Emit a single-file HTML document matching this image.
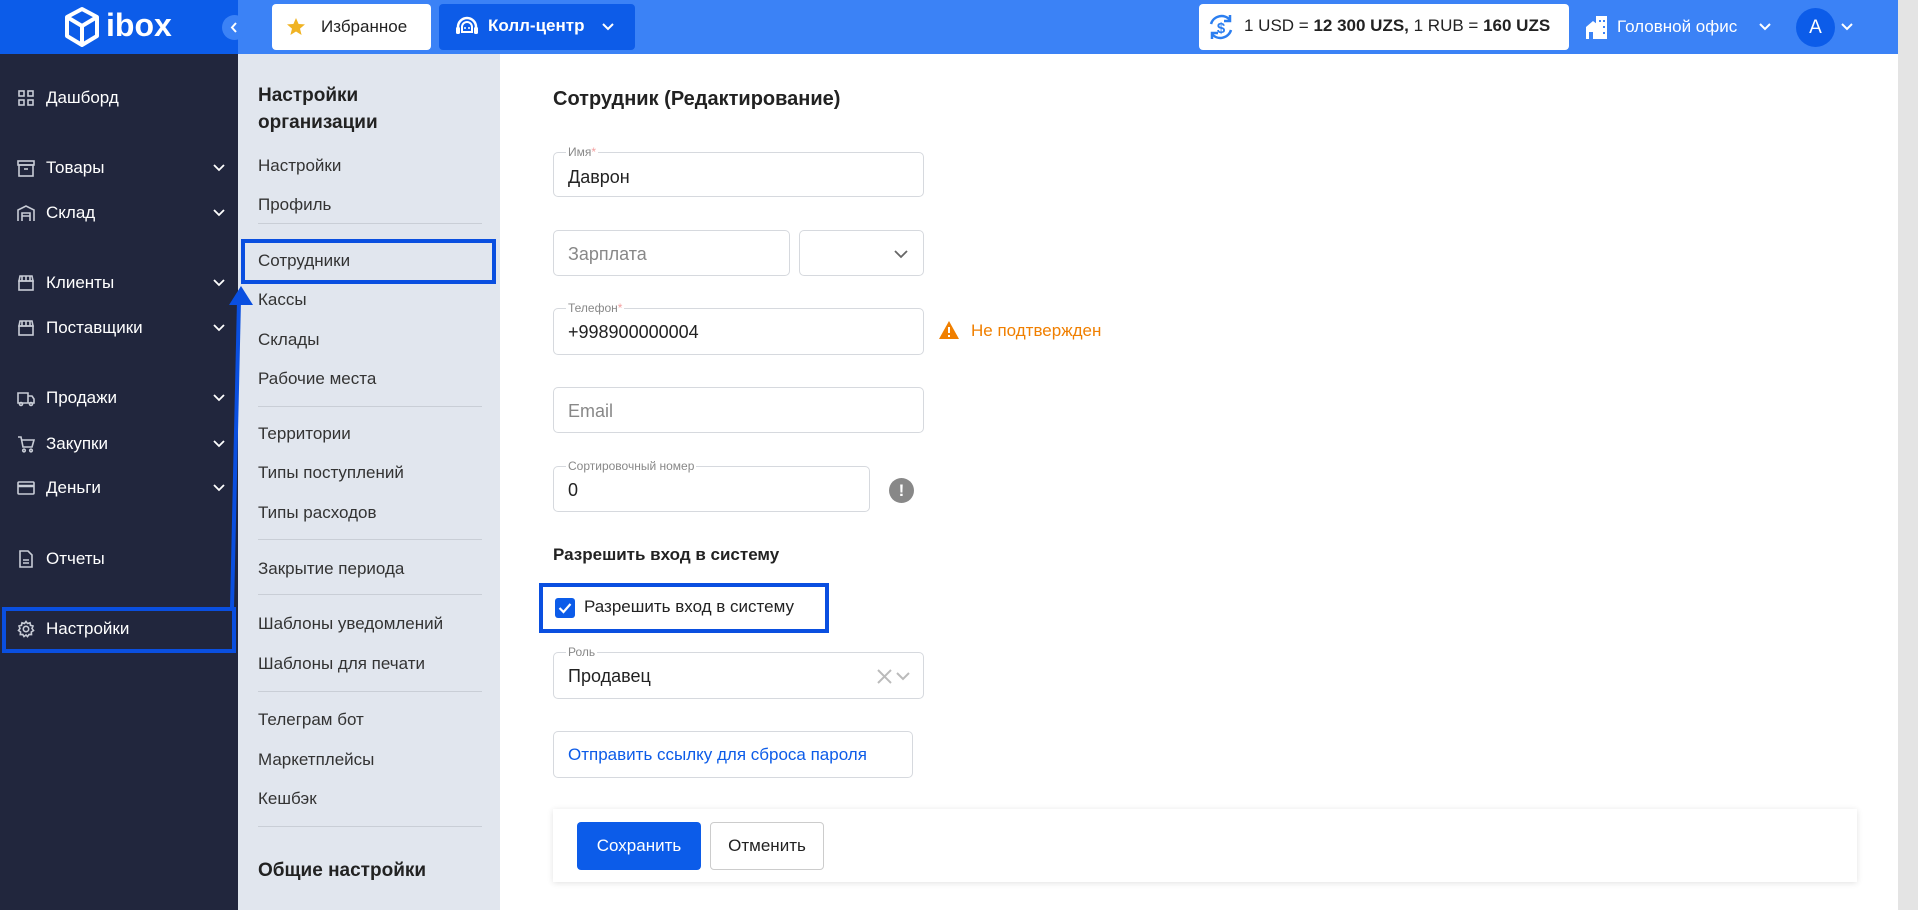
<!DOCTYPE html>
<html><head><meta charset="utf-8"><style>
*{box-sizing:border-box;margin:0;padding:0}
body{width:1918px;height:910px;overflow:hidden;font-family:"Liberation Sans","Noto Sans CJK SC",sans-serif;background:#fff;position:relative;color:#222}
.abs{position:absolute}
.hdr{left:0;top:0;width:1918px;height:54px;background:#3b82f6}
.logo{left:0;top:0;width:238px;height:54px;background:#0c5ce9}
.side{left:0;top:54px;width:238px;height:856px;background:#21263d}
.sub{left:238px;top:54px;width:262px;height:856px;background:#e1e6ee}
.si{position:absolute;left:46px;color:#fff;font-size:17px;line-height:20px}
.sic{position:absolute;left:17px;width:18px;height:18px}
.chev{position:absolute;left:213px;width:12px;height:8px}
.sm{position:absolute;left:258px;color:#333;font-size:17px;line-height:20px}
.dv{position:absolute;left:258px;width:224px;height:1px;background:#c9ced6}
.inp{position:absolute;border:1px solid #d6d9de;border-radius:5px;background:#fff;font-size:18px;color:#222}
.lbl{position:absolute;top:-8px;left:12px;background:#fff;padding:0 2px;font-size:12px;color:#888;line-height:14px}
.lbl b{color:#f3a0a0;font-weight:normal}
.val{position:absolute;left:14px;top:12px;line-height:22px}
.ph{color:#888}
</style></head><body>
<div class="abs hdr"></div>
<div class="abs logo"></div>
<svg class="abs" style="left:62px;top:6px" width="40" height="42" viewBox="0 0 40 42"><path d="M20 3 L35 11 V30 L20 39 L5 30 V11 Z M5 11 L20 20 L35 11 M20 20 V39" fill="none" stroke="#fff" stroke-width="4" stroke-linejoin="round"/></svg>
<div class="abs" style="left:106px;top:6px;color:#fff;font-weight:bold;font-size:32px;line-height:38px">ibox</div>
<div class="abs" style="left:222px;top:15px;width:25px;height:25px;border-radius:50%;background:#3b82f6"></div>
<svg class="abs" style="left:229px;top:21px" width="10" height="13" viewBox="0 0 10 13"><path d="M7 2 L3 6.5 L7 11" stroke="#fff" stroke-width="2" fill="none"/></svg>
<div class="abs" style="left:272px;top:4px;width:159px;height:46px;background:#fff;border-radius:4px"></div>
<svg class="abs" style="left:286px;top:17px" width="20" height="20" viewBox="0 0 20 20"><path d="M10 1 L12.6 7 L19 7.4 L14 11.6 L15.6 18 L10 14.5 L4.4 18 L6 11.6 L1 7.4 L7.4 7 Z" fill="#f0b323"/></svg>
<div class="abs" style="left:321px;top:17px;font-size:17px;color:#222">Избранное</div>
<div class="abs" style="left:439px;top:4px;width:196px;height:46px;background:#0d5ce8;border-radius:4px"></div>
<svg class="abs" style="left:454px;top:14px" width="26" height="26" viewBox="0 0 26 26"><path d="M4 17 V13 A9 9 0 0 1 22 13 V17" fill="none" stroke="#fff" stroke-width="2.5"/><rect x="2" y="13" width="4" height="7" rx="1.5" fill="#fff"/><rect x="20" y="13" width="4" height="7" rx="1.5" fill="#fff"/><path d="M8 13 A5 5 0 0 1 18 13 V18 H8Z" fill="none" stroke="#fff" stroke-width="2"/><circle cx="11" cy="14" r="1" fill="#fff"/><circle cx="15" cy="14" r="1" fill="#fff"/></svg>
<div class="abs" style="left:488px;top:16px;font-size:17px;color:#fff;font-weight:bold">Колл-центр</div>
<svg class="abs" style="left:601px;top:22px" width="14" height="10" viewBox="0 0 14 10"><path d="M2 2 L7 7 L12 2" stroke="#fff" stroke-width="2" fill="none"/></svg>
<div class="abs" style="left:1199px;top:4px;width:370px;height:46px;background:#fff;border-radius:4px"></div>
<svg class="abs" style="left:1206px;top:12px" width="30" height="30" viewBox="0 0 30 30"><path d="M5 12 A11 11 0 0 1 24 8 M25 18 A11 11 0 0 1 6 22" fill="none" stroke="#2b7ef0" stroke-width="2.5"/><path d="M24 3 V9 H18 M6 27 V21 H12" fill="none" stroke="#2b7ef0" stroke-width="2.5"/><text x="15" y="21" font-size="15" font-weight="bold" fill="#2b7ef0" text-anchor="middle" font-family="Liberation Sans">$</text></svg>
<div class="abs" style="left:1244px;top:16px;font-size:17px;color:#222;white-space:nowrap">1 USD = <b>12 300 UZS,</b> 1 RUB = <b>160 UZS</b></div>
<svg class="abs" style="left:1585px;top:14px" width="24" height="26" viewBox="0 0 24 26"><path d="M1 13 L8 7 L12 10 V25 H1Z" fill="#fff"/><rect x="11" y="2" width="11" height="23" fill="#fff"/><rect x="4" y="18" width="4" height="7" fill="#3b82f6"/><rect x="14" y="6" width="2" height="2" fill="#3b82f6"/><rect x="18" y="6" width="2" height="2" fill="#3b82f6"/><rect x="18" y="12" width="2" height="2" fill="#3b82f6"/><rect x="18" y="18" width="2" height="2" fill="#3b82f6"/></svg>
<div class="abs" style="left:1617px;top:17px;font-size:17px;color:#fff">Головной офис</div>
<svg class="abs" style="left:1758px;top:22px" width="14" height="10" viewBox="0 0 14 10"><path d="M2 2 L7 7 L12 2" stroke="#fff" stroke-width="2" fill="none"/></svg>
<div class="abs" style="left:1796px;top:8px;width:39px;height:39px;border-radius:50%;background:#0c5ce9;color:#fff;font-size:19px;text-align:center;line-height:39px">A</div>
<svg class="abs" style="left:1840px;top:22px" width="14" height="10" viewBox="0 0 14 10"><path d="M2 2 L7 7 L12 2" stroke="#fff" stroke-width="2" fill="none"/></svg>
<div class="abs" style="left:1898px;top:0;width:20px;height:910px;background:#e4e4e4"></div>

<div class="abs side"></div>
<div class="abs sub"></div>

<!-- sidebar items -->
<svg class="sic" style="top:89px" viewBox="0 0 18 18"><g fill="none" stroke="#c8ccd6" stroke-width="1.6"><rect x="2" y="2" width="5" height="5"/><rect x="11" y="2" width="5" height="5"/><rect x="2" y="11" width="5" height="5"/><rect x="11" y="11" width="5" height="5"/></g></svg>
<div class="si" style="top:88px">Дашборд</div>
<svg class="sic" style="top:159px" viewBox="0 0 18 18"><g fill="none" stroke="#c8ccd6" stroke-width="1.6"><rect x="1" y="2" width="16" height="4"/><rect x="2" y="6" width="14" height="11"/><path d="M7 10 H11"/></g></svg>
<div class="si" style="top:158px">Товары</div>
<svg class="sic" style="top:204px" viewBox="0 0 18 18"><g fill="none" stroke="#c8ccd6" stroke-width="1.6"><path d="M1 17 V6 L9 2 L17 6 V17"/><path d="M5 17 V9 H13 V17 M5 12 H13"/></g></svg>
<div class="si" style="top:203px">Склад</div>
<svg class="sic" style="top:274px" viewBox="0 0 18 18"><g fill="none" stroke="#c8ccd6" stroke-width="1.6"><path d="M2 7 L3 2 H15 L16 7 Z M5 2 V7 M9 2 V7 M13 2 V7"/><rect x="2" y="7" width="14" height="9"/></g></svg>
<div class="si" style="top:273px">Клиенты</div>
<svg class="sic" style="top:319px" viewBox="0 0 18 18"><g fill="none" stroke="#c8ccd6" stroke-width="1.6"><path d="M2 7 L3 2 H15 L16 7 Z M5 2 V7 M9 2 V7 M13 2 V7"/><rect x="2" y="7" width="14" height="9"/></g></svg>
<div class="si" style="top:318px">Поставщики</div>
<svg class="sic" style="top:389px" viewBox="0 0 18 18"><g fill="none" stroke="#c8ccd6" stroke-width="1.6"><path d="M1 4 H11 V14 H1Z M11 7 H15 L17 10 V14 H11"/><circle cx="4" cy="15" r="1.5"/><circle cx="14" cy="15" r="1.5"/></g></svg>
<div class="si" style="top:388px">Продажи</div>
<svg class="sic" style="top:435px" viewBox="0 0 18 18"><g fill="none" stroke="#c8ccd6" stroke-width="1.6"><path d="M1 2 H4 L6 12 H15 L17 5 H5"/><circle cx="7" cy="15.5" r="1.3"/><circle cx="14" cy="15.5" r="1.3"/></g></svg>
<div class="si" style="top:434px">Закупки</div>
<svg class="sic" style="top:479px" viewBox="0 0 18 18"><g fill="none" stroke="#c8ccd6" stroke-width="1.6"><rect x="1" y="3" width="16" height="12" rx="1"/><path d="M1 7 H17" stroke-width="2.5"/></g></svg>
<div class="si" style="top:478px">Деньги</div>
<svg class="sic" style="top:550px" viewBox="0 0 18 18"><g fill="none" stroke="#c8ccd6" stroke-width="1.6"><path d="M3 1 H11 L15 5 V17 H3Z M6 10 H12 M6 13 H12"/></g></svg>
<div class="si" style="top:549px">Отчеты</div>
<svg class="sic" style="top:620px" viewBox="0 0 18 18"><g fill="none" stroke="#c8ccd6" stroke-width="1.6"><circle cx="9" cy="9" r="2.7"/><path d="M9 1.5 L10.5 3.5 L13 2.8 L13.5 5.3 L16 6 L15 8.5 L16.5 10.5 L14.3 12 L14.5 14.6 L12 14.5 L10.5 16.6 L9 15 L7 16.6 L5.8 14.5 L3.3 14.6 L3.6 12 L1.5 10.5 L3 8.5 L2 6 L4.5 5.3 L5 2.8 L7.5 3.5Z"/></g></svg>
<div class="si" style="top:619px">Настройки</div>
<svg class="chev" style="top:164px" viewBox="0 0 12 8"><path d="M1 1 L6 6 L11 1" stroke="#fff" stroke-width="1.8" fill="none"/></svg>
<svg class="chev" style="top:209px" viewBox="0 0 12 8"><path d="M1 1 L6 6 L11 1" stroke="#fff" stroke-width="1.8" fill="none"/></svg>
<svg class="chev" style="top:279px" viewBox="0 0 12 8"><path d="M1 1 L6 6 L11 1" stroke="#fff" stroke-width="1.8" fill="none"/></svg>
<svg class="chev" style="top:324px" viewBox="0 0 12 8"><path d="M1 1 L6 6 L11 1" stroke="#fff" stroke-width="1.8" fill="none"/></svg>
<svg class="chev" style="top:394px" viewBox="0 0 12 8"><path d="M1 1 L6 6 L11 1" stroke="#fff" stroke-width="1.8" fill="none"/></svg>
<svg class="chev" style="top:440px" viewBox="0 0 12 8"><path d="M1 1 L6 6 L11 1" stroke="#fff" stroke-width="1.8" fill="none"/></svg>
<svg class="chev" style="top:484px" viewBox="0 0 12 8"><path d="M1 1 L6 6 L11 1" stroke="#fff" stroke-width="1.8" fill="none"/></svg>
<div class="abs" style="left:2px;top:607px;width:234px;height:46px;border:4px solid #0a4fe0"></div>

<!-- submenu -->
<div class="sm" style="top:82px;font-weight:bold;font-size:19px;line-height:27px;color:#222">Настройки<br>организации</div>
<div class="sm" style="top:156px">Настройки</div>
<div class="sm" style="top:195px">Профиль</div>
<div class="dv" style="top:223px"></div>
<div class="sm" style="top:251px">Сотрудники</div>
<div class="sm" style="top:290px">Кассы</div>
<div class="sm" style="top:330px">Склады</div>
<div class="sm" style="top:369px">Рабочие места</div>
<div class="dv" style="top:406px"></div>
<div class="sm" style="top:424px">Территории</div>
<div class="sm" style="top:463px">Типы поступлений</div>
<div class="sm" style="top:503px">Типы расходов</div>
<div class="dv" style="top:539px"></div>
<div class="sm" style="top:559px">Закрытие периода</div>
<div class="dv" style="top:594px"></div>
<div class="sm" style="top:614px">Шаблоны уведомлений</div>
<div class="sm" style="top:654px">Шаблоны для печати</div>
<div class="dv" style="top:691px"></div>
<div class="sm" style="top:710px">Телеграм бот</div>
<div class="sm" style="top:750px">Маркетплейсы</div>
<div class="sm" style="top:789px">Кешбэк</div>
<div class="dv" style="top:826px"></div>
<div class="sm" style="top:861px;font-weight:bold;font-size:19px;color:#222">Общие настройки</div>
<div class="abs" style="left:241px;top:239px;width:255px;height:45px;border:4px solid #0a4fe0"></div>
<svg class="abs" style="left:0;top:0" width="500" height="910"><path d="M232 608 L239 300" stroke="#0a4fe0" stroke-width="4"/><path d="M241 286 L229 305 L253 305 Z" fill="#0a4fe0"/></svg>

<!-- main -->
<div class="abs" style="left:553px;top:88px;font-size:20px;font-weight:bold;color:#222">Сотрудник (Редактирование)</div>
<div class="inp" style="left:553px;top:152px;width:371px;height:45px"><span class="lbl">Имя<b>*</b></span><span class="val" style="top:13px">Даврон</span></div>
<div class="inp" style="left:553px;top:230px;width:237px;height:46px"><span class="val ph">Зарплата</span></div>
<div class="inp" style="left:799px;top:230px;width:125px;height:46px"><svg class="abs" style="left:94px;top:19px" width="14" height="9" viewBox="0 0 14 9"><path d="M1 1 L7 7 L13 1" stroke="#666" stroke-width="1.8" fill="none"/></svg></div>
<div class="inp" style="left:553px;top:308px;width:371px;height:47px"><span class="lbl">Телефон<b>*</b></span><span class="val">+998900000004</span></div>
<svg class="abs" style="left:938px;top:320px" width="22" height="20" viewBox="0 0 22 20"><path d="M11 1 L21 19 H1 Z" fill="#f07f00"/><rect x="10" y="7" width="2" height="6" fill="#fff"/><rect x="10" y="15" width="2" height="2" fill="#fff"/></svg>
<div class="abs" style="left:971px;top:321px;font-size:17px;color:#f07f00">Не подтвержден</div>
<div class="inp" style="left:553px;top:387px;width:371px;height:46px"><span class="val ph">Email</span></div>
<div class="inp" style="left:553px;top:466px;width:317px;height:46px"><span class="lbl">Сортировочный номер</span><span class="val">0</span></div>
<div class="abs" style="left:889px;top:478px;width:25px;height:25px;border-radius:50%;background:#888;color:#fff;font-weight:bold;font-size:17px;text-align:center;line-height:25px">!</div>
<div class="abs" style="left:553px;top:545px;font-size:17px;font-weight:bold;color:#222">Разрешить вход в систему</div>
<div class="abs" style="left:539px;top:583px;width:290px;height:50px;border:4px solid #0a4fe0"></div>
<div class="abs" style="left:555px;top:598px;width:20px;height:20px;border-radius:3px;background:#0c5ce9"></div>
<svg class="abs" style="left:555px;top:598px" width="20" height="20" viewBox="0 0 20 20"><path d="M4.5 10 L8.5 14 L15.5 6" stroke="#fff" stroke-width="2.2" fill="none"/></svg>
<div class="abs" style="left:584px;top:597px;font-size:17px;color:#222">Разрешить вход в систему</div>
<div class="inp" style="left:553px;top:652px;width:371px;height:47px"><span class="lbl">Роль</span><span class="val">Продавец</span>
<svg class="abs" style="left:322px;top:16px" width="40" height="16" viewBox="0 0 40 16"><path d="M2 1 L15 14 M15 1 L2 14" stroke="#bbb" stroke-width="2"/><path d="M21 4 L27 10 L33 4" stroke="#bbb" stroke-width="2" fill="none"/></svg></div>
<div class="inp" style="left:553px;top:731px;width:360px;height:47px"><span class="val" style="color:#0d5ce8;top:12px;font-size:17px">Отправить ссылку для сброса пароля</span></div>
<div class="abs" style="left:553px;top:809px;width:1304px;height:73px;background:#fff;box-shadow:0 1px 6px rgba(0,0,0,0.12)"></div>
<div class="abs" style="left:577px;top:822px;width:124px;height:48px;background:#0c5ce9;border-radius:4px;color:#fff;font-size:17px;text-align:center;line-height:48px">Сохранить</div>
<div class="abs" style="left:710px;top:822px;width:114px;height:48px;border:1px solid #ccc;border-radius:4px;color:#222;font-size:17px;text-align:center;line-height:46px">Отменить</div>
</body></html>
